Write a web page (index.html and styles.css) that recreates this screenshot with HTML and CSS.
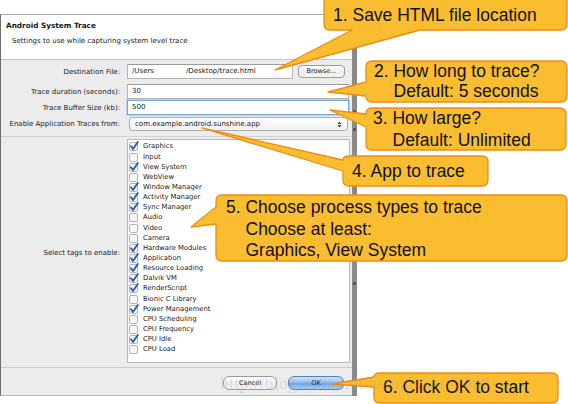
FILE: index.html
```html
<!DOCTYPE html>
<html>
<head>
<meta charset="utf-8">
<link rel="stylesheet" href="styles.css">
</head>
<body>
<div class="stage">
  <div class="window">
    <div class="dialog">
      <div class="head">
        <div class="title">Android System Trace</div>
        <div class="subtitle">Settings to use while capturing system level trace</div>
      </div>
      <div class="body">
        <div class="row r1">
          <div class="label">Destination File:</div>
          <div class="input short"><span>/Users</span><span class="gap">/Desktop/trace.html</span></div>
          <div class="btn browse">Browse...</div>
        </div>
        <div class="row r2">
          <div class="label">Trace duration (seconds):</div>
          <div class="input">30</div>
        </div>
        <div class="row r3">
          <div class="label">Trace Buffer Size (kb):</div>
          <div class="input focus">500</div>
        </div>
        <div class="row r4">
          <div class="label">Enable Application Traces from:</div>
          <div class="select"><span>com.example.android.sunshine.app</span>
            <svg class="arrows" width="5" height="7" viewBox="0 0 5 7"><path d="M0.5 3 L2.5 0.5 L4.5 3 Z M0.5 4 L2.5 6.5 L4.5 4 Z" fill="#444"/></svg>
          </div>
        </div>
        <div class="tags">
          <div class="label tagslabel">Select tags to enable:</div>
          <div class="list">
            <div class="item"><svg class="cb" viewBox="0 0 10 10"><rect x="0.5" y="1.5" width="8" height="8" rx="1.5" class="box"/><path d="M2 5.2 L4 8 L8.8 1" class="tick"/></svg>Graphics</div>
            <div class="item"><svg class="cb" viewBox="0 0 10 10"><rect x="0.5" y="1.5" width="8" height="8" rx="1.5" class="box"/></svg>Input</div>
            <div class="item"><svg class="cb" viewBox="0 0 10 10"><rect x="0.5" y="1.5" width="8" height="8" rx="1.5" class="box"/><path d="M2 5.2 L4 8 L8.8 1" class="tick"/></svg>View System</div>
            <div class="item"><svg class="cb" viewBox="0 0 10 10"><rect x="0.5" y="1.5" width="8" height="8" rx="1.5" class="box"/></svg>WebView</div>
            <div class="item"><svg class="cb" viewBox="0 0 10 10"><rect x="0.5" y="1.5" width="8" height="8" rx="1.5" class="box"/><path d="M2 5.2 L4 8 L8.8 1" class="tick"/></svg>Window Manager</div>
            <div class="item"><svg class="cb" viewBox="0 0 10 10"><rect x="0.5" y="1.5" width="8" height="8" rx="1.5" class="box"/><path d="M2 5.2 L4 8 L8.8 1" class="tick"/></svg>Activity Manager</div>
            <div class="item"><svg class="cb" viewBox="0 0 10 10"><rect x="0.5" y="1.5" width="8" height="8" rx="1.5" class="box"/><path d="M2 5.2 L4 8 L8.8 1" class="tick"/></svg>Sync Manager</div>
            <div class="item"><svg class="cb" viewBox="0 0 10 10"><rect x="0.5" y="1.5" width="8" height="8" rx="1.5" class="box"/></svg>Audio</div>
            <div class="item"><svg class="cb" viewBox="0 0 10 10"><rect x="0.5" y="1.5" width="8" height="8" rx="1.5" class="box"/></svg>Video</div>
            <div class="item"><svg class="cb" viewBox="0 0 10 10"><rect x="0.5" y="1.5" width="8" height="8" rx="1.5" class="box"/></svg>Camera</div>
            <div class="item"><svg class="cb" viewBox="0 0 10 10"><rect x="0.5" y="1.5" width="8" height="8" rx="1.5" class="box"/><path d="M2 5.2 L4 8 L8.8 1" class="tick"/></svg>Hardware Modules</div>
            <div class="item"><svg class="cb" viewBox="0 0 10 10"><rect x="0.5" y="1.5" width="8" height="8" rx="1.5" class="box"/><path d="M2 5.2 L4 8 L8.8 1" class="tick"/></svg>Application</div>
            <div class="item"><svg class="cb" viewBox="0 0 10 10"><rect x="0.5" y="1.5" width="8" height="8" rx="1.5" class="box"/><path d="M2 5.2 L4 8 L8.8 1" class="tick"/></svg>Resource Loading</div>
            <div class="item"><svg class="cb" viewBox="0 0 10 10"><rect x="0.5" y="1.5" width="8" height="8" rx="1.5" class="box"/><path d="M2 5.2 L4 8 L8.8 1" class="tick"/></svg>Dalvik VM</div>
            <div class="item"><svg class="cb" viewBox="0 0 10 10"><rect x="0.5" y="1.5" width="8" height="8" rx="1.5" class="box"/><path d="M2 5.2 L4 8 L8.8 1" class="tick"/></svg>RenderScript</div>
            <div class="item"><svg class="cb" viewBox="0 0 10 10"><rect x="0.5" y="1.5" width="8" height="8" rx="1.5" class="box"/></svg>Bionic C Library</div>
            <div class="item"><svg class="cb" viewBox="0 0 10 10"><rect x="0.5" y="1.5" width="8" height="8" rx="1.5" class="box"/><path d="M2 5.2 L4 8 L8.8 1" class="tick"/></svg>Power Management</div>
            <div class="item"><svg class="cb" viewBox="0 0 10 10"><rect x="0.5" y="1.5" width="8" height="8" rx="1.5" class="box"/></svg>CPU Scheduling</div>
            <div class="item"><svg class="cb" viewBox="0 0 10 10"><rect x="0.5" y="1.5" width="8" height="8" rx="1.5" class="box"/></svg>CPU Frequency</div>
            <div class="item"><svg class="cb" viewBox="0 0 10 10"><rect x="0.5" y="1.5" width="8" height="8" rx="1.5" class="box"/><path d="M2 5.2 L4 8 L8.8 1" class="tick"/></svg>CPU Idle</div>
            <div class="item"><svg class="cb" viewBox="0 0 10 10"><rect x="0.5" y="1.5" width="8" height="8" rx="1.5" class="box"/></svg>CPU Load</div>
          </div>
        </div>
      </div>
      <div class="foot">
        <div class="btn cancel">Cancel</div>
        <div class="btn ok">OK</div>
      </div>
    </div>
    <div class="strip">
      <i class="dot d1"></i><i class="dot d2"></i><i class="dot d3"></i><i class="dot d4"></i>
    </div>
  </div>

  <svg class="callouts" width="568" height="404" viewBox="0 0 568 404">
    <g fill="#fbbd30" stroke="#ef8c12" stroke-width="1.3" stroke-linejoin="round">
      <path d="M330 -6 H561 Q567 -6 567 0 V24 Q567 30 561 30 H420 L275 70 L352 30 H330 Q324 30 324 24 V0 Q324 -6 330 -6 Z"/>
      <path d="M372 61 H561 Q567 61 567 67 V96 Q567 102 561 102 H372 Q366 102 366 96 V96 L328 92 L366 82 V67 Q366 61 372 61 Z"/>
      <path d="M372 108 H560 Q566 108 566 114 V144 Q566 150 560 150 H372 Q366 150 366 144 V127 L330 110 L366 114 Q366 108 372 108 Z"/>
      <path d="M349 156 H482 Q488 156 488 162 V180 Q488 186 482 186 H349 Q343 186 343 180 V171 L202 128 L343 160 Q343 156 349 156 Z"/>
      <path d="M222 195 H561 Q567 195 567 201 V255 Q567 261 561 261 H222 Q216 261 216 255 V224 L191 227 L216 207 V201 Q216 195 222 195 Z"/>
      <path d="M380 373 H552 Q558 373 558 379 V397 Q558 403 552 403 H380 Q374 403 374 397 V387 L332 384 L374 377 Q374 373 380 373 Z"/>
    </g>
  </svg>

  <div class="note n1">1. Save HTML file location</div>
  <div class="note n2">2. How long to trace?<br><span class="ind">Default: 5 seconds</span></div>
  <div class="note n3">3. How large?<br><span class="ind">Default: Unlimited</span></div>
  <div class="note n4">4. App to trace</div>
  <div class="note n5">5. Choose process types to trace<br><span class="ind">Choose at least:</span><br><span class="ind">Graphics, View System</span></div>
  <div class="note n6">6. Click OK to start</div>
  <div class="watermark">http://blog.csdn.net/huangyabin2008</div>
</div>
</body>
</html>
```

FILE: styles.css
```css
* { box-sizing: border-box; }
html, body { margin: 0; padding: 0; background: #fff; }
body { width: 568px; height: 404px; overflow: hidden; }

.stage { position: relative; width: 568px; height: 404px; }

.window { display: flex; padding-top: 14px; }

.dialog {
  width: 352px;
  height: 382px;
  display: flex;
  flex-direction: column;
  border-left: 1px solid #6d6d6d;
  border-top: 1px solid #a9a9a9;
  border-bottom: 1px solid #b9b9b9;
  font-family: "DejaVu Sans", sans-serif;
  font-size: 7px;
  color: #1a1a1a;
}

.head {
  height: 46px;
  background: #fff;
  border-bottom: 1px solid #c6c6c6;
  padding: 6px 0 0 5px;
}
.title { font-weight: bold; font-size: 7.3px; line-height: 10px; }
.subtitle { line-height: 10px; margin: 5px 0 0 6px; }

.body {
  flex: 1;
  background: #ececec;
  display: flex;
  flex-direction: column;
  padding-top: 4px;
}

.row { display: flex; align-items: center; height: 15px; }
.r2 { margin-top: 5px; }
.r3 { margin-top: 1px; }
.r4 { margin-top: 2px; height: 14px; }

.label { width: 119px; text-align: right; flex: none; margin-right: 7px; white-space: nowrap; }

.input {
  height: 15px;
  width: 222px;
  background: #fff;
  border: 1px solid #b4b4b4;
  border-top-color: #9c9c9c;
  padding-left: 4px;
  line-height: 13px;
  white-space: nowrap;
}
.input.short { width: 166px; }
.input .gap { margin-left: 32px; }
.input.focus { border: 1px solid #7ba6de; box-shadow: 0 0 0 1px #b6d0ef; }

.btn {
  font-family: "DejaVu Sans", sans-serif;
  text-align: center;
  border: 1px solid #9a9a9a;
  border-radius: 4px;
  background: linear-gradient(#ffffff, #ececec 60%, #f6f6f6);
  line-height: 11px;
  font-size: 6.5px;
  color: #222;
}
.browse { width: 47px; height: 13px; margin-left: 5px; }

.select {
  margin-left: 2px;
  width: 219px;
  height: 14px;
  border: 1px solid #adadad;
  border-radius: 3px;
  background: linear-gradient(#ffffff, #f1f1f1);
  padding: 0 5px;
  display: flex;
  align-items: center;
  justify-content: space-between;
}

.tags {
  margin-top: 5px;
  border-top: 1px solid #d2d2d2;
  flex: 1;
  display: flex;
  align-items: center;
  padding-top: 2px;
  padding-bottom: 4px;
  border-bottom: 1px solid #cdcdcd;
}
.tagslabel { align-self: center; margin-top: 4px; }

.list {
  width: 223px;
  height: 224px;
  align-self: flex-start;
  background: #fff;
  border: 1px solid #b9b9b9;
  padding: 1px 0 0 1px;
}
.item {
  display: flex;
  align-items: center;
  height: 10.15px;
  line-height: 10px;
  white-space: nowrap;
  font-size: 6.8px;
}
.cb { width: 10px; height: 10px; margin-right: 4px; flex: none; }
.cb .box { fill: #f7f7f7; stroke: #a9a9a9; stroke-width: 0.9; }
.cb .tick { fill: none; stroke: #2a5bb4; stroke-width: 1.9; stroke-linecap: round; stroke-linejoin: round; }

.foot {
  height: 27px;
  background: #ececec;
  display: flex;
  justify-content: flex-end;
  align-items: flex-start;
  padding: 8px 8px 0 0;
  gap: 11px;
}
.cancel { width: 54px; height: 14px; line-height: 12px; border-radius: 6px; }
.ok {
  width: 56px; height: 14px; line-height: 12px; border-radius: 6px;
  border-color: #5b7fb5;
  background: linear-gradient(#cfe3fb, #8ebcf0 50%, #6aa5ea 55%, #a9d0f8);
}

.strip {
  width: 5px;
  height: 382px;
  background: #8a8a8a;
  position: relative;
}
.dot { position: absolute; left: 1px; width: 3px; height: 3px; background: #555; border-radius: 1px; }
.d1 { top: 78px; } .d2 { top: 96px; } .d3 { top: 114px; } .d4 { top: 268px; }

.callouts { position: absolute; left: 0; top: 0; }

.note {
  position: absolute;
  font-family: "Liberation Sans", Arial, sans-serif;
  font-size: 17.5px;
  line-height: 21px;
  color: #111;
  white-space: nowrap;
}
.ind { padding-left: 19.5px; }
.n1 { left: 333px; top: 5px; }
.n2 { left: 374px; top: 61px; line-height: 20px; }
.n3 { left: 373px; top: 107px; line-height: 22px; }
.n4 { left: 352px; top: 161px; }
.n5 { left: 226px; top: 197px; line-height: 21.5px; }
.n6 { left: 383px; top: 377px; }

.watermark {
  position: absolute;
  left: 220px;
  top: 374px;
  font-family: "Liberation Serif", serif;
  font-size: 17px;
  letter-spacing: 0.6px;
  color: rgba(160, 160, 160, 0.28);
  white-space: nowrap;
}
```
